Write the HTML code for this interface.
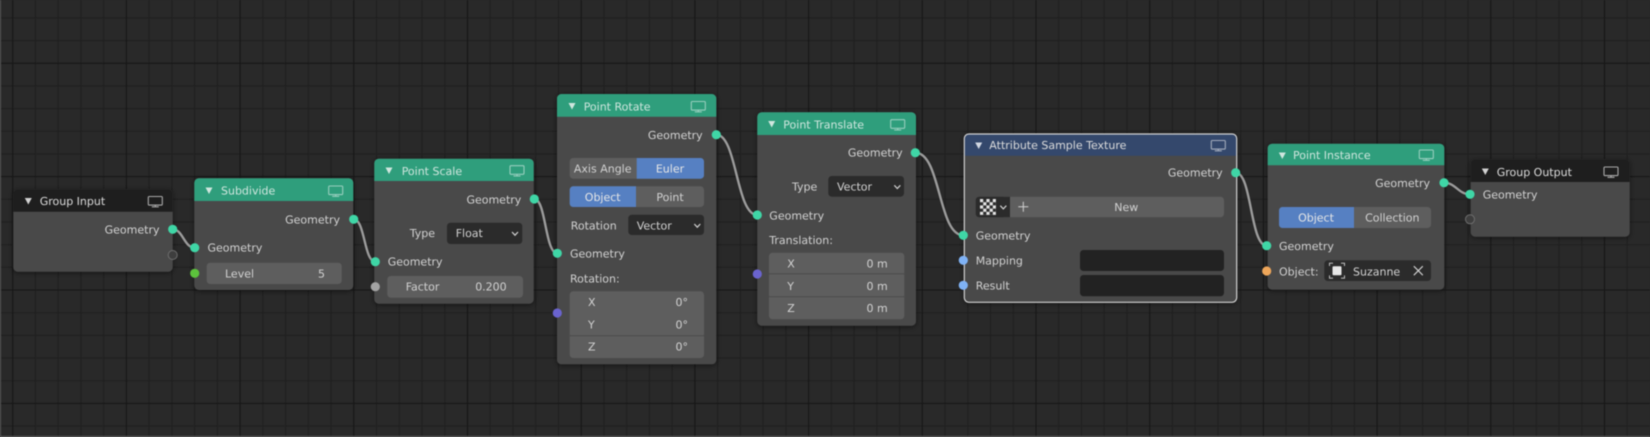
<!DOCTYPE html>
<html><head><meta charset="utf-8"><title>Geometry Nodes</title>
<style>
html,body{margin:0;padding:0;background:#292929;width:1650px;height:437px;overflow:hidden}
svg{display:block;position:absolute;left:0;top:0;filter:blur(.4px)}
text{font-family:"DejaVu Sans",sans-serif;font-size:11px;fill:#d2d2d2;text-rendering:geometricPrecision}
.e{text-anchor:end}.m{text-anchor:middle}
.h{fill:#dcdcdc}.g{fill:#cfe6de}
.link{fill:none;stroke:#9c9c9c;stroke-width:2.4;stroke-linecap:round}
.linko{fill:none;stroke:#222;stroke-width:3.8;opacity:.45}
.chev{fill:none;stroke:#d2d2d2;stroke-width:1.2}
.w{fill:#5e5e5e}.b{fill:#5680c2}.d{fill:#2b2b2b}
.gs{fill:#3fd6a6}
.body{fill:#4a4a4a;fill-opacity:.97}
</style></head><body>
<svg width="1650" height="437" viewBox="0 0 1650 437" xmlns="http://www.w3.org/2000/svg">
<defs>
<pattern id="check" width="6.4" height="6.4" patternUnits="userSpaceOnUse" x="980" y="199"><rect width="6.4" height="6.4" fill="#2a2a2a"/><rect width="3.2" height="3.2" fill="#e6e6e6"/><rect x="3.2" y="3.2" width="3.2" height="3.2" fill="#e6e6e6"/></pattern>
<filter id="sh" x="-15%" y="-15%" width="130%" height="130%"><feDropShadow dx="0" dy="1" stdDeviation="3" flood-color="#000" flood-opacity=".55"/></filter>
<g id="mon" fill="none" stroke="#fff" stroke-width="1.1"><rect x="-7" y="-5" width="14" height="8.6" rx="1"/><path d="M-3.5 5.3H3.5M0 3.6V5.3"/></g>
</defs>

<rect width="1650" height="437" fill="#292929"/>
<path fill="none" stroke="#1f1f1f" stroke-width="1" d="M35.4 0V437M58.2 0V437M80.9 0V437M103.7 0V437M149.1 0V437M171.9 0V437M194.6 0V437M217.4 0V437M262.8 0V437M285.6 0V437M308.3 0V437M331.1 0V437M376.5 0V437M399.3 0V437M422 0V437M444.8 0V437M490.2 0V437M513 0V437M535.7 0V437M558.5 0V437M603.9 0V437M626.7 0V437M649.4 0V437M672.2 0V437M717.6 0V437M740.4 0V437M763.1 0V437M785.9 0V437M831.3 0V437M854.1 0V437M876.8 0V437M899.6 0V437M945 0V437M967.8 0V437M990.5 0V437M1013.3 0V437M1058.7 0V437M1081.5 0V437M1104.2 0V437M1127 0V437M1172.4 0V437M1195.2 0V437M1217.9 0V437M1240.7 0V437M1286.1 0V437M1308.9 0V437M1331.6 0V437M1354.4 0V437M1399.8 0V437M1422.6 0V437M1445.3 0V437M1468.1 0V437M1513.5 0V437M1536.3 0V437M1559 0V437M1581.8 0V437M1627.2 0V437M0 17.9H1650M0 40.6H1650M0 85.9H1650M0 108.6H1650M0 131.3H1650M0 154H1650M0 199.3H1650M0 222H1650M0 244.7H1650M0 267.3H1650M0 312.7H1650M0 335.4H1650M0 358H1650M0 380.7H1650M0 426H1650"/>
<path fill="none" stroke="#171717" stroke-width="1.1" d="M12.7 0V437M126.4 0V437M240.1 0V437M353.8 0V437M467.5 0V437M581.2 0V437M694.9 0V437M808.6 0V437M922.3 0V437M1036 0V437M1149.7 0V437M1263.4 0V437M1377.1 0V437M1490.8 0V437M1604.5 0V437M0 63.3H1650M0 176.6H1650M0 290H1650M0 403.4H1650"/>
<rect width="1" height="437" fill="#5a5a5a"/>
<rect y="436" width="1650" height="1" fill="#6a6a6a"/>

<!-- links -->
<g>
<path class="linko" d="M172.7 229.3C183 229.3 184 247.7 194.7 247.7"/><path class="link" d="M172.7 229.3C183 229.3 184 247.7 194.7 247.7"/>
<path class="linko" d="M353.7 219.3C365 219.3 364 261.7 375.3 261.7"/><path class="link" d="M353.7 219.3C365 219.3 364 261.7 375.3 261.7"/>
<path class="linko" d="M534.3 199C546 199 545 253.3 557.3 253.3"/><path class="link" d="M534.3 199C546 199 545 253.3 557.3 253.3"/>
<path class="linko" d="M716.3 134.7C737 134.7 736 215 757.3 215"/><path class="link" d="M716.3 134.7C737 134.7 736 215 757.3 215"/>
<path class="linko" d="M915.3 152.7C941 152.7 938 235.3 963.3 235.3"/><path class="link" d="M915.3 152.7C941 152.7 938 235.3 963.3 235.3"/>
<path class="linko" d="M1235.7 172.7C1252 172.7 1250 245.7 1266.7 245.7"/><path class="link" d="M1235.7 172.7C1252 172.7 1250 245.7 1266.7 245.7"/>
<path class="linko" d="M1444 182.7C1456 182.7 1458 194.3 1470 194.3"/><path class="link" d="M1444 182.7C1456 182.7 1458 194.3 1470 194.3"/>
</g>

<!-- Group Input -->
<g>
<rect class="body" x="13.3" y="189.3" width="159.4" height="82.4" rx="4.5" filter="url(#sh)"/>
<path d="M13.3 211.7V193.8a4.5 4.5 0 0 1 4.5-4.5H168.2a4.5 4.5 0 0 1 4.5 4.5V211.7Z" fill="#1e1e1e"/>
<polygon points="24.8,198 31.8,198 28.3,204.5" fill="#d2d2d2"/>
<text class="h" x="39.7" y="205">Group Input</text>
<use href="#mon" x="155.3" y="201.5" opacity=".62"/>
<text class="e" x="159.5" y="233.5">Geometry</text>
</g>

<!-- Subdivide -->
<g>
<rect class="body" x="194.3" y="178.3" width="159" height="111.7" rx="4.5" filter="url(#sh)"/>
<path d="M194.3 201V182.8a4.5 4.5 0 0 1 4.5-4.5H348.8a4.5 4.5 0 0 1 4.5 4.5V201Z" fill="#2f9e7c"/>
<polygon points="205.5,187.5 212.5,187.5 209,194" fill="#cfe6de"/>
<text class="g" x="221" y="194.7">Subdivide</text>
<use href="#mon" x="335.7" y="191" opacity=".5"/>
<text class="e" x="340" y="223.3">Geometry</text>
<text x="207.5" y="251.7">Geometry</text>
<rect class="w" x="206.7" y="262.7" width="135" height="21.3" rx="3.5"/>
<text x="225" y="277.5">Level</text><text class="e" x="325" y="277.5">5</text>
</g>

<!-- Point Scale -->
<g>
<rect class="body" x="374.3" y="158.7" width="159.4" height="145" rx="4.5" filter="url(#sh)"/>
<path d="M374.3 181V163.2a4.5 4.5 0 0 1 4.5-4.5H529.2a4.5 4.5 0 0 1 4.5 4.5V181Z" fill="#2f9e7c"/>
<polygon points="385.5,167.5 392.5,167.5 389,174" fill="#cfe6de"/>
<text class="g" x="401.7" y="175">Point Scale</text>
<use href="#mon" x="517" y="170.7" opacity=".5"/>
<text class="e" x="521.3" y="203.3">Geometry</text>
<text class="e" x="435" y="237">Type</text>
<rect class="d" x="447" y="222.7" width="75.3" height="21.3" rx="3.5"/>
<text x="455.7" y="237">Float</text>
<polyline class="chev" points="512,232 515,235.2 518,232"/>
<text x="387.7" y="265.7">Geometry</text>
<rect class="w" x="387.3" y="276" width="135.7" height="21.7" rx="3.5"/>
<text x="405.7" y="290.7">Factor</text><text class="e" x="506.7" y="290.7">0.200</text>
</g>

<!-- Point Rotate -->
<g>
<rect class="body" x="557" y="94" width="159.3" height="270.3" rx="4.5" filter="url(#sh)"/>
<path d="M557 116.7V98.5a4.5 4.5 0 0 1 4.5-4.5H711.8a4.5 4.5 0 0 1 4.5 4.5V116.7Z" fill="#2f9e7c"/>
<polygon points="568.5,103 575.5,103 572,109.5" fill="#cfe6de"/>
<text class="g" x="583.7" y="110.3">Point Rotate</text>
<use href="#mon" x="698.3" y="106.5" opacity=".5"/>
<text class="e" x="702.7" y="139">Geometry</text>
<rect class="w" x="569.7" y="158" width="134.3" height="20.7" rx="3.5"/>
<path class="b" d="M636.7 158H700.5a3.5 3.5 0 0 1 3.5 3.5V175.2a3.5 3.5 0 0 1-3.5 3.5H636.7Z"/>
<text class="m" x="602.7" y="172.7">Axis Angle</text><text class="m" x="670" y="172.7" style="fill:#e6e6e6">Euler</text>
<rect class="w" x="569.7" y="186.3" width="134.3" height="20.7" rx="3.5"/>
<path class="b" d="M636 186.3H573.2a3.5 3.5 0 0 0-3.5 3.5V203.5a3.5 3.5 0 0 0 3.5 3.5H636Z"/>
<text class="m" x="602.7" y="201" style="fill:#e6e6e6">Object</text><text class="m" x="670" y="201">Point</text>
<text x="570.7" y="229.3">Rotation</text>
<rect class="d" x="628.3" y="214.7" width="75.7" height="20.3" rx="3.5"/>
<text x="636.7" y="229.3">Vector</text>
<polyline class="chev" points="694.3,224 697.3,227.2 700.3,224"/>
<text x="570" y="257.7">Geometry</text>
<text x="570" y="282.7">Rotation:</text>
<rect class="w" x="569.7" y="291.3" width="134.3" height="66.7" rx="3.5"/>
<rect x="569.7" y="335.3" width="134.3" height=".8" fill="#474747"/>
<text x="588" y="306">X</text><text class="e" x="688" y="306">0°</text>
<text x="588" y="328.5">Y</text><text class="e" x="688" y="328.5">0°</text>
<text x="588" y="350.7">Z</text><text class="e" x="688" y="350.7">0°</text>
</g>

<!-- Point Translate -->
<g>
<rect class="body" x="757.3" y="112.3" width="158.7" height="213.4" rx="4.5" filter="url(#sh)"/>
<path d="M757.3 135V116.8a4.5 4.5 0 0 1 4.5-4.5H911.5a4.5 4.5 0 0 1 4.5 4.5V135Z" fill="#2f9e7c"/>
<polygon points="768.2,121 775.2,121 771.7,127.5" fill="#cfe6de"/>
<text class="g" x="783.3" y="128.3">Point Translate</text>
<use href="#mon" x="897.7" y="124.7" opacity=".5"/>
<text class="e" x="902.7" y="156.7">Geometry</text>
<text class="e" x="817.3" y="190.7">Type</text>
<rect class="d" x="828.3" y="176" width="75.7" height="20.7" rx="3.5"/>
<text x="837" y="190.7">Vector</text>
<polyline class="chev" points="894.3,185.3 897.3,188.5 900.3,185.3"/>
<text x="769.3" y="219.3">Geometry</text>
<text x="769.3" y="244">Translation:</text>
<rect class="w" x="769" y="252.7" width="135.3" height="66.6" rx="3.5"/>
<rect x="769" y="273.4" width="135.3" height=".8" fill="#474747"/>
<rect x="769" y="296.3" width="135.3" height=".8" fill="#474747"/>
<text x="787.3" y="267.3">X</text><text class="e" x="887.7" y="267.3">0 m</text>
<text x="787.3" y="290">Y</text><text class="e" x="887.7" y="290">0 m</text>
<text x="787.3" y="312">Z</text><text class="e" x="887.7" y="312">0 m</text>
</g>

<!-- Attribute Sample Texture -->
<g>
<rect class="body" x="964.3" y="134" width="272.4" height="168.3" rx="4.5" filter="url(#sh)"/>
<path d="M964.3 155.7V138.5a4.5 4.5 0 0 1 4.5-4.5H1232.2a4.5 4.5 0 0 1 4.5 4.5V155.7Z" fill="#34486c"/>
<polygon points="975.2,142.5 982.2,142.5 978.7,149" fill="#d2d8e2"/>
<text class="h" x="989.3" y="149">Attribute Sample Texture</text>
<use href="#mon" x="1218.3" y="145.5" opacity=".55"/>
<rect x="964.3" y="134" width="272.4" height="168.3" rx="4.5" fill="none" stroke="#d2d2d2" stroke-width="1.2"/>
<text class="e" x="1222.7" y="176.7">Geometry</text>
<rect class="w" x="1000" y="196.7" width="224" height="20.6" rx="3.5"/>
<path d="M1010 196.7H979.2a3.5 3.5 0 0 0-3.5 3.5V213.8a3.5 3.5 0 0 0 3.5 3.5H1010Z" fill="#2b2b2b"/>
<rect x="980" y="199" width="16" height="16" fill="url(#check)"/>
<polyline class="chev" points="1000.3,205.7 1003.3,208.9 1006.3,205.7"/>
<path d="M1018.3 206.7H1028.3M1023.3 201.7V211.7" fill="none" stroke="#d2d2d2" stroke-width="1"/>
<text class="m" x="1126.3" y="211">New</text>
<text x="975.7" y="239.7">Geometry</text>
<text x="975.7" y="264.7">Mapping</text>
<text x="975.7" y="289.7">Result</text>
<rect x="1080" y="250" width="144" height="21" rx="3.5" fill="#222"/>
<rect x="1080" y="275" width="144" height="21.3" rx="3.5" fill="#222"/>
</g>

<!-- Point Instance -->
<g>
<rect class="body" x="1267.7" y="143.7" width="176.6" height="146" rx="4.5" filter="url(#sh)"/>
<path d="M1267.7 165.3V148.2a4.5 4.5 0 0 1 4.5-4.5H1439.8a4.5 4.5 0 0 1 4.5 4.5V165.3Z" fill="#2f9e7c"/>
<polygon points="1278.8,152.5 1285.8,152.5 1282.3,159" fill="#cfe6de"/>
<text class="g" x="1293" y="159">Point Instance</text>
<use href="#mon" x="1426.3" y="155" opacity=".5"/>
<text class="e" x="1430" y="187">Geometry</text>
<rect class="w" x="1279" y="207" width="152" height="21" rx="3.5"/>
<path class="b" d="M1354 207H1282.5a3.5 3.5 0 0 0-3.5 3.5V224.5a3.5 3.5 0 0 0 3.5 3.5H1354Z"/>
<text class="m" x="1316" y="221.7" style="fill:#e6e6e6">Object</text><text class="m" x="1392.3" y="221.7">Collection</text>
<text x="1279" y="250">Geometry</text>
<text x="1279" y="275.3">Object:</text>
<rect x="1324.3" y="260.3" width="106.7" height="20.7" rx="3.5" fill="#2b2b2b"/>
<rect x="1332.5" y="266.2" width="9" height="9" rx="1" fill="#e6e6e6"/>
<path d="M1329.5 266V263.2H1333M1341 263.2H1344.5V266M1344.5 275.4V278.2H1341M1333 278.2H1329.5V275.4" fill="none" stroke="#cfcfcf" stroke-width=".9"/>
<text x="1353" y="275.3">Suzanne</text>
<path d="M1413.8 266.2L1422.8 275.2M1422.8 266.2L1413.8 275.2" fill="none" stroke="#d2d2d2" stroke-width="1.1"/>
</g>

<!-- Group Output -->
<g>
<rect class="body" x="1470.7" y="159.3" width="159" height="77.4" rx="4.5" filter="url(#sh)"/>
<path d="M1470.7 182V163.8a4.5 4.5 0 0 1 4.5-4.5H1625.2a4.5 4.5 0 0 1 4.5 4.5V182Z" fill="#1e1e1e"/>
<polygon points="1481.8,168.5 1488.8,168.5 1485.3,175" fill="#d2d2d2"/>
<text class="h" x="1496.7" y="176">Group Output</text>
<use href="#mon" x="1611" y="172" opacity=".62"/>
<text x="1482.7" y="198.3">Geometry</text>
</g>

<!-- sockets -->
<g>
<circle class="gs" cx="172.7" cy="229.3" r="4.6"/>
<circle cx="172.7" cy="255" r="4.5" fill="#3e3e3e" stroke="#6e6e6e" stroke-width="1"/>
<circle class="gs" cx="194.7" cy="247.7" r="4.6"/>
<circle cx="194.7" cy="273.3" r="4.6" fill="#5cc23c"/>
<circle class="gs" cx="353.7" cy="219.3" r="4.6"/>
<circle class="gs" cx="375.3" cy="261.7" r="4.6"/>
<circle cx="375.3" cy="286.7" r="4.6" fill="#a3a3a3"/>
<circle class="gs" cx="534.3" cy="199" r="4.6"/>
<circle class="gs" cx="557.3" cy="253.3" r="4.6"/>
<circle cx="557.3" cy="313" r="4.6" fill="#6a63ce"/>
<circle class="gs" cx="716.3" cy="134.7" r="4.6"/>
<circle class="gs" cx="757.3" cy="215" r="4.6"/>
<circle cx="757.3" cy="274" r="4.6" fill="#6a63ce"/>
<circle class="gs" cx="915.3" cy="152.7" r="4.6"/>
<circle class="gs" cx="963.3" cy="235.3" r="4.6"/>
<circle cx="963.3" cy="260.3" r="4.6" fill="#7fb2f5"/>
<circle cx="963.3" cy="285.3" r="4.6" fill="#7fb2f5"/>
<circle class="gs" cx="1235.7" cy="172.7" r="4.6"/>
<circle class="gs" cx="1266.7" cy="245.7" r="4.6"/>
<circle cx="1266.7" cy="271" r="4.6" fill="#eea65a"/>
<circle class="gs" cx="1444" cy="182.7" r="4.6"/>
<circle class="gs" cx="1470" cy="194.3" r="4.6"/>
<circle cx="1470" cy="219.3" r="4.5" fill="#3e3e3e" stroke="#6e6e6e" stroke-width="1"/>
</g>
</svg>
</body></html>
